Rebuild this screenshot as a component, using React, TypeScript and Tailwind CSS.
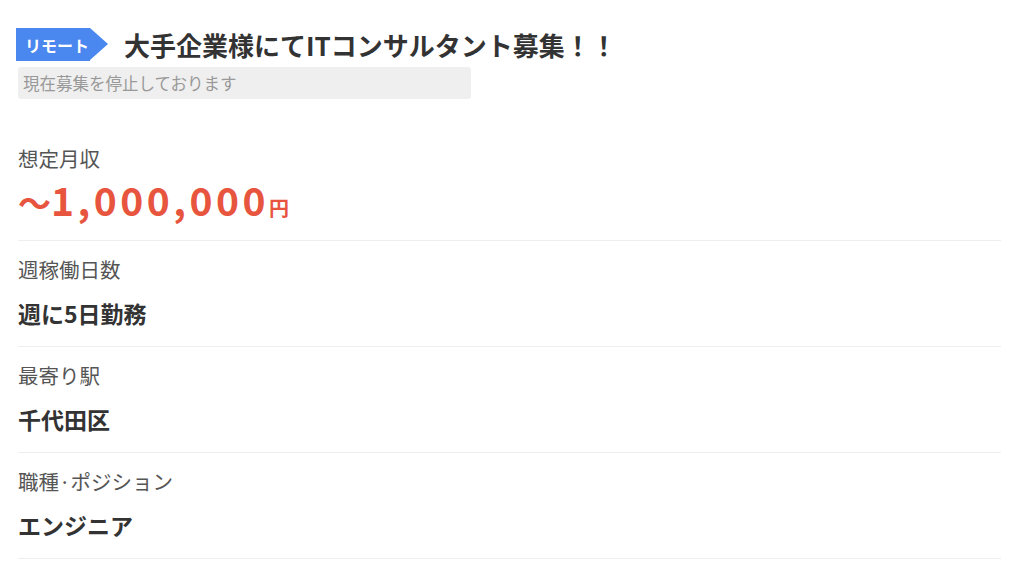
import React from "react";

const font = { fontFamily: '"Noto Sans CJK JP", "Noto Sans", sans-serif' };

function Row({ label, value }: { label: string; value: string }) {
  return (
    <div className="border-b border-[#eeeeee] pt-[13px] pb-[18px]">
      <div className="text-[20.5px] leading-[30px] text-[#555555]">{label}</div>
      <div className="mt-[14px] text-[23px] font-bold leading-[30px] text-[#333333]">{value}</div>
    </div>
  );
}

export default function App() {
  return (
    <div className="min-h-[588px] w-[1024px] bg-white" style={font}>
      <div className="w-[1001px] pl-[18px] pt-[28px]">
        <div className="flex items-center">
          <div className="relative -ml-[2px] flex h-[33px] w-[74px] shrink-0 items-center bg-[#4a87ee] pl-[9px]">
            <span className="whitespace-nowrap text-[16px] font-bold text-white">リモート</span>
            <div className="absolute right-[-18px] top-0 h-0 w-0 border-y-[16.5px] border-l-[18px] border-y-transparent border-l-[#4a87ee]" />
          </div>
          <h1 className="ml-[34px] whitespace-nowrap text-[26px] font-bold leading-[33px] text-[#333333]">
            大手企業様にてITコンサルタント募集！！
          </h1>
        </div>
        <div className="mt-[6px] flex h-[32px] w-[453px] items-center rounded-[3px] bg-[#efefef] pl-[5px] text-[16.5px] text-[#999999]">
          現在募集を停止しております
        </div>
        <div className="mt-[29px]">
          <div className="border-b border-[#eeeeee] pt-[15px] pb-[11px]">
            <div className="text-[20.5px] leading-[30px] text-[#555555]">想定月収</div>
            <div className="mt-[5px] flex items-baseline font-bold leading-[42px] text-[#e8553f]">
              <span className="text-[33px]">～</span>
              <span className="text-[39px] tracking-[3.5px]">1,000,000</span>
              <span className="text-[20px]">円</span>
            </div>
          </div>
          <Row label="週稼働日数" value="週に5日勤務" />
          <Row label="最寄り駅" value="千代田区" />
          <Row label="職種·ポジション" value="エンジニア" />
        </div>
      </div>
    </div>
  );
}
